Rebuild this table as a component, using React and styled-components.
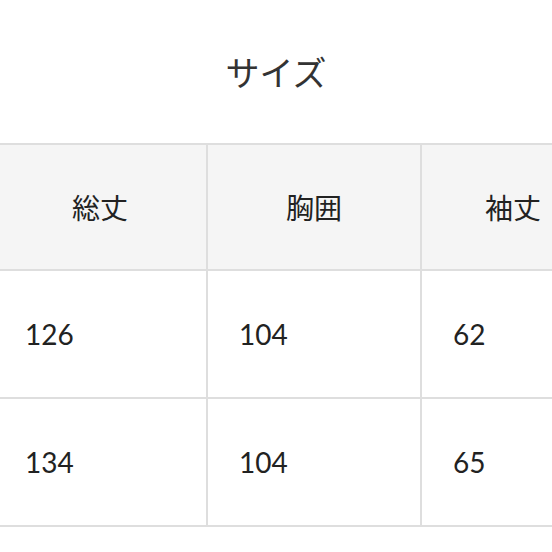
import React from 'react'
import styled, { createGlobalStyle } from 'styled-components'

const Global = createGlobalStyle`
  html, body { margin: 0; padding: 0; background: #fff; overflow: hidden; }
  body { font-family: Lato, "Noto Sans CJK JP", sans-serif; color: #222; }
`

const Page = styled.div`
  width: 552px;
  height: 552px;
  overflow: hidden;
`

const Title = styled.h2`
  margin: 0;
  height: 143px;
  display: flex;
  align-items: center;
  justify-content: center;
  font-size: 34px;
  font-weight: 400;
  color: #333;
  font-family: "Noto Sans CJK JP", sans-serif;
`

const Table = styled.table`
  border-collapse: collapse;
  table-layout: fixed;
  margin-left: -8px;
  width: 612px;
`

const HeadCell = styled.th`
  width: ${(p) => p.$w}px;
  height: 124px;
  background: #f5f5f5;
  border: 2px solid #dedede;
  font-family: "Noto Sans CJK JP", sans-serif;
  font-weight: 400;
  font-size: 28px;
  color: #222;
  text-align: center;
  padding: 0;
`

const Cell = styled.td`
  height: 126px;
  border: 2px solid #dedede;
  font-size: 28px;
  color: #222;
  padding: 0 0 0 31px;
  text-align: left;
`

const heads = [
  { label: '総丈', w: 212 },
  { label: '胸囲', w: 212 },
  { label: '袖丈', w: 182 },
]
const rows = [
  ['126', '104', '62'],
  ['134', '104', '65'],
]

export default function App() {
  return (
    <Page>
      <Global />
      <Title>サイズ</Title>
      <Table>
        <thead>
          <tr>
            {heads.map((h) => (
              <HeadCell key={h.label} $w={h.w}>
                {h.label}
              </HeadCell>
            ))}
          </tr>
        </thead>
        <tbody>
          {rows.map((r, i) => (
            <tr key={i}>
              {r.map((v, j) => (
                <Cell key={j}>{v}</Cell>
              ))}
            </tr>
          ))}
        </tbody>
      </Table>
    </Page>
  )
}
